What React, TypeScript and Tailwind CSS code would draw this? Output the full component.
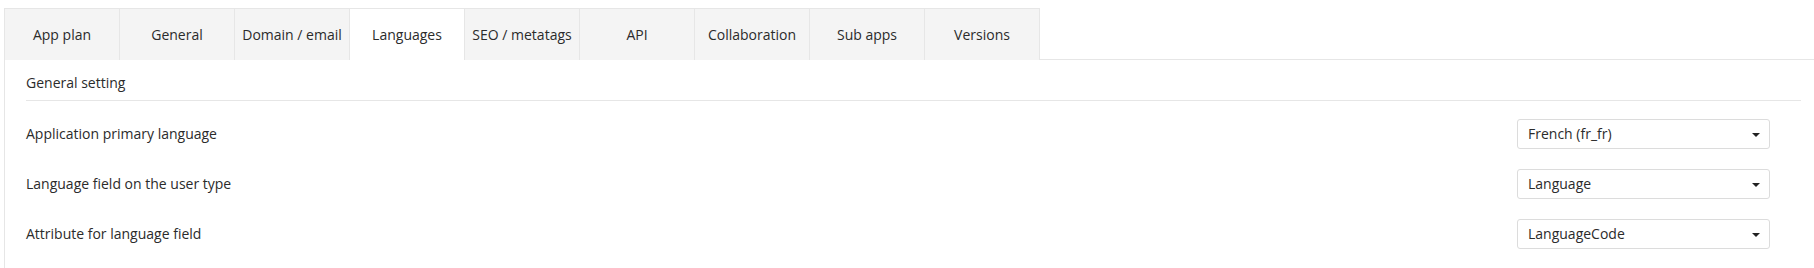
const tabs = [
  "App plan",
  "General",
  "Domain / email",
  "Languages",
  "SEO / metatags",
  "API",
  "Collaboration",
  "Sub apps",
  "Versions",
];

const settings = [
  { label: "Application primary language", value: "French (fr_fr)" },
  { label: "Language field on the user type", value: "Language" },
  { label: "Attribute for language field", value: "LanguageCode" },
];

function SelectBox({ value }: { value: string }) {
  return (
    <div className="flex h-[30px] w-[253px] items-center justify-between rounded-[3px] border border-[#dcdcdc] bg-white pl-[10px] pr-[9px]">
      <span className="text-[14px] leading-5 text-[#2b2b2b]">{value}</span>
      <svg width="8" height="4" viewBox="0 0 8 4" className="mt-[1px]">
        <path d="M0 0h8L4 4z" fill="#222" />
      </svg>
    </div>
  );
}

export default function App() {
  return (
    <div
      className="min-h-[268px] bg-white pl-1 pt-2 text-[#2b2b2b]"
      style={{ fontFamily: '"Open Sans", "Liberation Sans", sans-serif' }}
    >
      <div className="min-h-[260px] border-l border-[#e6e6e6]">
        <div className="flex">
          {tabs.map((tab) => (
            <div
              key={tab}
              className={`flex h-[52px] w-[115px] shrink-0 items-center justify-center border-r border-t border-[#e6e6e6] text-[14px] ${
                tab === "Languages" ? "bg-white" : "bg-[#f4f4f4]"
              }`}
            >
              {tab}
            </div>
          ))}
          <div className="h-[52px] flex-1 border-b border-[#e6e6e6]" />
        </div>

        <div className="pl-[21px] pr-[13px]">
          <div className="border-b border-[#e6e6e6] pb-[7px] pt-[13px] text-[14px] leading-5">
            General setting
          </div>
          <div className="pr-[31px] pt-2">
            {settings.map((s) => (
              <div key={s.label} className="flex h-[50px] items-center justify-between">
                <span className="text-[14px] leading-5">{s.label}</span>
                <SelectBox value={s.value} />
              </div>
            ))}
          </div>
        </div>
      </div>
    </div>
  );
}
